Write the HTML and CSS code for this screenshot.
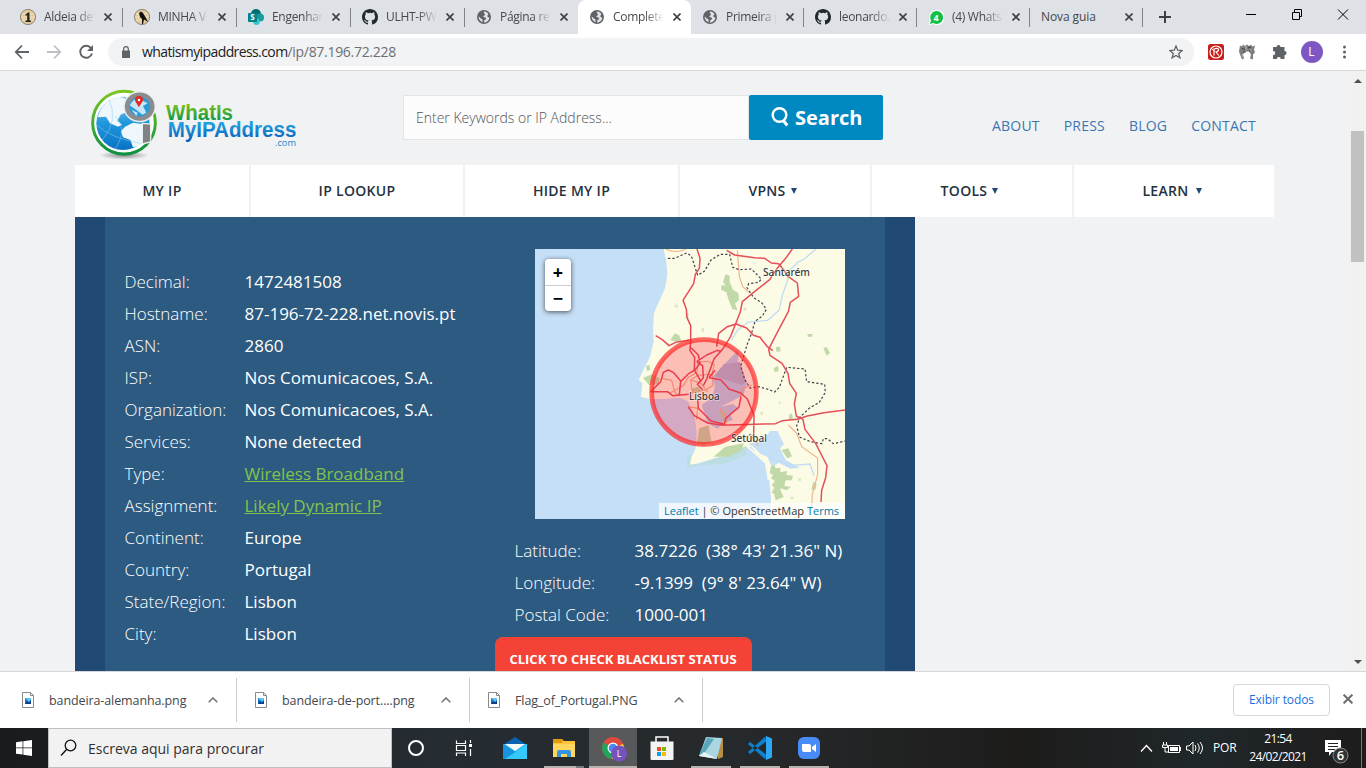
FILE: index.html
```html
<!DOCTYPE html>
<html lang="pt">
<head>
<meta charset="utf-8">
<title>Complete IP Address Details</title>
<link rel="stylesheet" href="styles.css">
</head>
<body>
<svg class="defs" width="0" height="0">
  <symbol id="globe" viewBox="0 0 14 14"><circle cx="7" cy="7" r="7" fill="#5f6368"/><path d="M7 1.6C6.2 3 7.6 3.5 8 4.6c.3 1-1.600 1-1.700 2 .2 1.200 1.900.4 2.700 1.400.5 1-.6 1.600-1.700 2.200L7 12.400C10 12.500 12.300 10 12.400 7.400c-1.200.4-2-.3-2-1.300 0-1 .7-1 1-2C10.500 2.500 9 1.500 7 1.600zM1.600 6.500C1.600 9 3 11.500 5.500 12.200 5.400 10.500 6 10 5 9 4 8.600 3.500 8.600 3 7.500z" fill="#dee1e6"/></symbol>
  <symbol id="github" viewBox="0 0 16 16"><path fill="#24292e" d="M8 0C3.58 0 0 3.58 0 8c0 3.540 2.290 6.530 5.470 7.590.4.070.55-.17.55-.38v-1.490c-2.010.37-2.530-.49-2.690-.94-.09-.23-.48-.94-.82-1.130-.28-.15-.68-.52-.01-.53.63-.01 1.080.58 1.230.82.72 1.210 1.870.87 2.330.66.07-.52.28-.87.51-1.070-1.780-.2-3.640-.89-3.640-3.950 0-.87.31-1.590.82-2.150-.08-.2-.36-1.020.08-2.120 0 0 .67-.21 2.200.82a7.600 7.600 0 0 1 4 0c1.530-1.040 2.200-.82 2.200-.82.44 1.100.16 1.920.08 2.120.51.56.82 1.270.82 2.150 0 3.070-1.870 3.750-3.650 3.950.29.25.54.73.54 1.480v2.200c0 .21.15.46.55.38A8 8 0 0 0 16 8c0-4.420-3.580-8-8-8z"/></symbol>
  <symbol id="x" viewBox="0 0 8 8"><path d="M.5.5l7 7M7.500.5l-7 7" stroke="currentColor" stroke-width="1.600" fill="none"/></symbol>
  <symbol id="file" viewBox="0 0 12 16"><path d="M.5.5h8l3 3v12H.5z" fill="#fff" stroke="#8a8a8a"/><path d="M8.500.5v3h3" fill="none" stroke="#8a8a8a"/><path d="M3 6h6v6H3z" fill="#1976c8"/><path d="M3 6h6v3L7 10 5 8z" fill="#5fc3f2"/><path d="M3 12l2-3 2 1.500L9 8v4z" fill="#0b3f86"/></symbol>
  <symbol id="up" viewBox="0 0 10 6"><path d="M.7 5.300L5 1l4.300 4.300" fill="none" stroke="currentColor" stroke-width="1.600"/></symbol>
</svg>

<div class="tabs">
  <div class="tab"><svg class="fav" viewBox="0 0 16 16"><circle cx="8" cy="8" r="7.600" fill="#e3cb9b" stroke="#77705f" stroke-width=".8"/><path d="M2 5h12M1 8h14M2 11h12" stroke="#f4e5c4"/><path d="M5.500 5.500L8 3.500h1.500v8H11V13H5.500v-1.500h1.700V6l-1.700 1z" fill="#222"/></svg><span class="name">Aldeia de</span><svg class="close"><use href="#x"/></svg></div>
  <div class="tab"><svg class="fav" viewBox="0 0 16 16"><circle cx="8" cy="8" r="7.600" fill="#e3cb9b" stroke="#77705f" stroke-width=".8"/><path d="M2 5h12M1 8h14M2 11h12" stroke="#f4e5c4"/><path d="M5 4l2-1.500L9 4l3 5 2 4-4-2.500L9 15H8v-5L6 8z" fill="#111"/></svg><span class="name">MINHA V</span><svg class="close"><use href="#x"/></svg></div>
  <div class="tab"><svg class="fav" viewBox="0 0 16 16"><circle cx="8" cy="5" r="5" fill="#036c70"/><circle cx="12" cy="8.500" r="4" fill="#1a9ba1"/><circle cx="8.500" cy="12.800" r="3.200" fill="#37c6d0"/><rect y="4" width="9" height="9" rx="1" fill="#038387"/><text x="4.500" y="11" class="sp">S</text></svg><span class="name">Engenhar</span><svg class="close"><use href="#x"/></svg></div>
  <div class="tab"><svg class="fav"><use href="#github"/></svg><span class="name">ULHT-PW</span><svg class="close"><use href="#x"/></svg></div>
  <div class="tab plain"><svg class="fav small"><use href="#globe"/></svg><span class="name">Página re</span><svg class="close"><use href="#x"/></svg></div>
  <div class="tab active plain"><svg class="fav small"><use href="#globe"/></svg><span class="name">Complete</span><svg class="close"><use href="#x"/></svg></div>
  <div class="tab"><svg class="fav small"><use href="#globe"/></svg><span class="name">Primeira p</span><svg class="close"><use href="#x"/></svg></div>
  <div class="tab"><svg class="fav"><use href="#github"/></svg><span class="name">leonardoz</span><svg class="close"><use href="#x"/></svg></div>
  <div class="tab"><svg class="fav" viewBox="0 0 16 16"><path d="M1 16l1-4.500A7.600 7.600 0 1 1 5 15z" fill="#fff"/><path d="M2 15l1-3.600A6.400 6.400 0 1 1 5.500 14z" fill="#12c143"/><text x="8.200" y="11.500" class="wa">4</text></svg><span class="name">(4) Whats</span><svg class="close"><use href="#x"/></svg></div>
  <div class="tab"><span class="name wide">Nova guia</span><svg class="close"><use href="#x"/></svg></div>
  <svg class="newtab" viewBox="0 0 12 12"><path d="M6 0v12M0 6h12" stroke="#3c4043" stroke-width="2"/></svg>
  <svg class="winctl" viewBox="0 0 104 12"><path d="M0 6.500h10" stroke="#000"/><path d="M46.500 4.500h7v7h-7zM48.500 4v-2.500h7v7H54" fill="none" stroke="#000"/><path d="M92 1.500l10 10M102 1.500l-10 10" stroke="#000"/></svg>
</div>

<div class="toolbar">
  <svg class="navicons" viewBox="0 0 96 36"><path d="M29 18H16M22 11.500L15.800 18l6.200 6.500" fill="none" stroke="#5f6368" stroke-width="1.800"/><path d="M47 18h13M54 11.500l6.200 6.500-6.200 6.500" fill="none" stroke="#bdc1c6" stroke-width="1.800"/><path d="M91.300 14.500A6 6 0 1 0 92 19.500" fill="none" stroke="#5f6368" stroke-width="1.900"/><path d="M93 11v6h-6z" fill="#5f6368"/></svg>
  <div class="omnibox">
    <svg class="lock" viewBox="0 0 8 12"><path d="M0 4.500h8V12H0z" fill="#5f6368"/><path d="M1.700 5V3a2.300 2.300 0 0 1 4.600 0v2" fill="none" stroke="#5f6368" stroke-width="1.200"/></svg>
    <span class="url">whatismyipaddress.com<span class="path">/ip/87.196.72.228</span></span>
    <svg class="star" viewBox="0 0 14 14"><path d="M7 1l1.700 4.200 4.500.3-3.500 2.900 1.200 4.400L7 10.400l-3.900 2.400 1.200-4.400L.8 5.500l4.500-.3z" fill="none" stroke="#5f6368" stroke-width="1.300"/></svg>
  </div>
  <svg class="exts" viewBox="0 0 172 36">
    <rect x="14" y="10" width="16" height="16" rx="2.500" fill="#c9201c"/><circle cx="22" cy="18" r="6" fill="none" stroke="#fff" stroke-width="1.200"/><path d="M20 21.500v-6.500q4-1.500 4.500.8 0 1.700-2.500 2.200l2.800 3.500" fill="none" stroke="#fff" stroke-width="1.200"/><path d="M17.500 14.500l3 3" stroke="#fff"/>
    <path d="M46 11.500l2 1 1-2 2 1.500 2-1.500 2 1.500 2-1.500 1 2 3-1-1 4 1 3-2 2v5l-3-1 1-4-2-3h-4l-2 3 1 4-2 1-2-5-1-3z" fill="#7d7d7d"/><path d="M48 14.500l3 1M54 14l3-1M49 18h3M55 17h3" stroke="#3a3a3a"/><path d="M52 12v4M57 15v3M48 20l1 3" stroke="#bbb"/>
    <path d="M79 13h3.500a2 2 0 0 1 4 0h4v4a2.100 2.100 0 0 1 0 4.200V25h-3.700a2 2 0 0 0-4 0H79v-3.700a2.200 2.200 0 0 0 0-4.400z" fill="#5f6368"/>
    <circle cx="118" cy="18" r="11" fill="#7e57c2"/><text x="117.500" y="22" class="avatar">L</text>
    <circle cx="150.500" cy="13" r="1.500" fill="#5f6368"/><circle cx="150.500" cy="18" r="1.500" fill="#5f6368"/><circle cx="150.500" cy="23" r="1.500" fill="#5f6368"/>
  </svg>
</div>

<div class="viewport">
  <div class="page">
    <header class="head">
      <svg class="logo" viewBox="0 0 720 255">
        <defs>
          <linearGradient id="ring" x1="0" y1="0" x2="0" y2="1"><stop offset="0" stop-color="#7cc623"/><stop offset="1" stop-color="#0d9140"/></linearGradient>
          <linearGradient id="sea" x1="0" y1="0" x2="0" y2="1"><stop offset="0" stop-color="#8acbee"/><stop offset=".5" stop-color="#1f97dc"/><stop offset="1" stop-color="#0a72c5"/></linearGradient>
          <linearGradient id="word1" x1="0" y1="0" x2="0" y2="1"><stop offset=".2" stop-color="#79bf20"/><stop offset=".85" stop-color="#07964b"/></linearGradient>
          <linearGradient id="word2" x1="0" y1="0" x2="0" y2="1"><stop offset=".2" stop-color="#20a0e0"/><stop offset="1" stop-color="#0759b5"/></linearGradient>
          <radialGradient id="shade"><stop offset="0" stop-color="#888"/><stop offset="1" stop-color="#f1f2f4"/></radialGradient>
        </defs>
        <ellipse cx="147" cy="226" rx="74" ry="13" fill="url(#shade)"/>
        <circle cx="147" cy="128" r="94" fill="#fff" stroke="url(#ring)" stroke-width="9"/>
        <circle cx="144" cy="130" r="80" fill="url(#sea)"/>
        <path d="M68 112Q80 62 133 50l22 8-10 22 14 14-22 10-10 18 14 12-12 6-24-10-12-20zM150 140l24-12 28 4 22 18-8 28-24 20-18 4-8-22-22-8-6-18z" fill="#eef7fc"/>
        <path d="M64 135Q110 175 196 190M82 180q50-60 20-120M120 208q40-60 0-100" fill="none" stroke="#8dcdf0" stroke-width="1.500"/>
        <ellipse cx="194" cy="80" rx="38" ry="36" fill="#2a9bd9" stroke="#eceeef" stroke-width="22"/>
        <ellipse cx="194" cy="80" rx="38" ry="36" fill="#2a9bd9" stroke="#8b8c8f" stroke-width="13"/>
        <path d="M164 76q14-24 28-20l26 14-14 8 10 20-12 6-15-12zM170 90l18 8-4 10z" fill="#c6e6f7"/>
        <path d="M192 82c-5-11-12-16-12-23a12 11 0 0 1 24 0c0 7-8 12-12 23z" fill="#e22922"/><circle cx="192" cy="60" r="4" fill="#fff"/>
        <path d="M202 130l25 2v54l-25 6z" fill="#808286" stroke="#eceeef" stroke-width="4"/>
        <text x="273" y="120" textLength="201" lengthAdjust="spacingAndGlyphs" class="w1">WhatIs</text>
        <text x="278" y="172" textLength="386" lengthAdjust="spacingAndGlyphs" class="w2">MyIPAddress</text>
        <text x="600" y="197" textLength="63" lengthAdjust="spacingAndGlyphs" class="w3">.com</text>
      </svg>
      <div class="search"><div class="field">Enter Keywords or IP Address...</div><div class="btn"><svg viewBox="0 0 18 20"><circle cx="8.500" cy="8" r="6.800" fill="none" stroke="#fff" stroke-width="2.400"/><path d="M12 13l4.200 5.500" stroke="#fff" stroke-width="3"/></svg>Search</div></div>
      <nav class="links"><a>ABOUT</a><a>PRESS</a><a>BLOG</a><a>CONTACT</a></nav>
    </header>
    <nav class="menu">
      <a>MY IP</a><a>IP LOOKUP</a><a>HIDE MY IP</a><a>VPNS<i></i></a><a>TOOLS<i></i></a><a>LEARN<i class="far"></i></a>
    </nav>
    <main class="panel">
      <dl class="rows left">
        <dt>Decimal:</dt><dd>1472481508</dd>
        <dt>Hostname:</dt><dd>87-196-72-228.net.novis.pt</dd>
        <dt>ASN:</dt><dd>2860</dd>
        <dt>ISP:</dt><dd>Nos Comunicacoes, S.A.</dd>
        <dt>Organization:</dt><dd>Nos Comunicacoes, S.A.</dd>
        <dt>Services:</dt><dd>None detected</dd>
        <dt>Type:</dt><dd><a>Wireless Broadband</a></dd>
        <dt>Assignment:</dt><dd><a>Likely Dynamic IP</a></dd>
        <dt>Continent:</dt><dd>Europe</dd>
        <dt>Country:</dt><dd>Portugal</dd>
        <dt>State/Region:</dt><dd>Lisbon</dd>
        <dt>City:</dt><dd>Lisbon</dd>
      </dl>
      <section class="right">
        <div class="map">
          <svg viewBox="0 12 930 810">
            <rect y="12" width="930" height="810" fill="#c5dff6"/>
            <path d="M386 12L394 50 397 90 390 130 370 175 357 205 354 250 356 290 345 335 325 375 311 405 322 415 318 455 345 462 385 462 435 458 460 470 478 510 485 560 482 610 468 640 465 660 490 655 540 640 600 625 632 603 650 607 690 655 702 700 708 760 706 822H930V12z" fill="#fcfbe5"/>
            <path d="M455 630l15 0-6 28 26 0 50-17 60-14 35-27v30l-70 26-80 6-28 8z" fill="#b5dcd5" opacity=".6"/>
            <path d="M632 603l58 52 8 50 5 0-4-45-20-26-44-33z" fill="#fcfbe5"/>
            <path d="M640 596l45-8 20-30 22 0 20 40-12 12 17 35 42 23-28 3-35-18-20 14-14-32-20-8-20-20z" fill="#c5dff6"/>
            <path d="M500 480l30-20 10-38-8-25 34-38 30-30 12-15 2 30-14 26 22 15 18 28-10 36-40 22-30 14 38-8 20 14-30 16 10 18-30 8-16 18-30-16z" fill="#b7d3ed"/>
            <path d="M590 285l18-30 30-23 60-6 34-30 10-45 16-45 0-24 30-30 20-10 35-30M705 635l60 27 60-5 12 35" fill="none" stroke="#c2ddf2" stroke-width="4"/>
            <path d="M572 88l12 4 0 20 10 22 16 10 2 20-12 12 8 20-16-4-12-30-6-20-16-8 2-14 12 2-8-12zM406 285l6-10 8-10 12 6 8 18-22 0zM333 362l10-3 3 16-10 3zM324 398l28-10 22 12-4 18-28 2zM493 549l28-8 8 50-20 10-24-4zM536 635l35-30 55-10-4 20-40 20zM740 615l20-5 11 24-14 6zM708 664l10-4 4 10 14-2 0 14 20-4-2 12 20 2-4 14-18 0-4 16 20 4-14 10-16-6-12 18-16-4 8-16-8-8 10-12-12-8 6-10-10-6zM714 733l20-3 12 26-24 10zM835 710l10 6-4 18-12 0zM865 310l10-4 10 18-10 8zM818 267h14v8h-14zM716 370l13-8 2 16-12 4zM762 510l9-5 3 18-12 2zM722 307l13-2 2 14-12 2zM556 500l12-7 4 24-14 6zM470 431l20-6 10 14-26 4z" fill="#c1d8a8"/>
            <path d="M500 248h7v14h-7zM452 205h9v16h-9zM420 177l10 4-3 8-9-4zM625 190l8-4 2 8-7 4zM676 500h8v10h-8zM780 515h14v8h-14zM730 470h8v6h-8zM790 700h8v8h-8zM765 755h12v7h-12z" fill="#dfe8c5"/>
            <path d="M566 358l48-8 20 60-14 10-80-26z" fill="#aebbd5"/>
            <path d="M392 12q30 15 60 0M607 16l6 78 10 30 18 18M380 400l30 6 10 38 15 8M404 445l42-24 12-22 28-18 2-30 30-2 20 10-6 24 2 38-22 14-40 8-5-38 22-14 42-4M468 405l30 10 20 26M650 420l-26 10-10 25M555 490l20 30 0 14M760 540l25 25 15 40 48 34 0 50-16 58-2 50M645 566l15 20 10 18M460 485l28 5-4 34" fill="none" stroke="#efb58a" stroke-width="3.500"/>
            <path d="M399 40h20l36-16 14 9 19 58 20-12 20-34 28-17h28l9 39 20 7 36-2 30 30-8 10-30 4-5 12 20 30 24 15 14 20-12 20-22 16-11 38-12 30-20 66 12 40 16 26 26-4 28 8 20 8 14-14 22-60 55 5 5 38 54 8 2 24-18 30-28 16-30 28-10 26 8 34 34 14 34 6 4-15 12 0 18 15 54-12" fill="none" stroke="#45434f" stroke-width="3.600" stroke-dasharray="7 6"/>
            <g fill="none" stroke="#e44f58" stroke-width="4.500" stroke-linejoin="round">
              <path d="M486 12l9 28-2 30-12 18-5 28-32 50 10 26 2 26 11 24 0 45-2 30 14 20-1 38 20 35M362 272l20 12 20 18 20-10 40-6M575 16l24 14 60 8 30 2 20 14 22 2 16 20 12 18 28 20 4 40-25 18-6 28-24 45-20 38-15 30 4 18 36 24 18 30 5 30 20 30-6 32 6 36 20 10 6 30 32 42 16 32 18 35-4 36-12 38-2 35"/>
              <path d="M772 12l-20 28-24 28-24 36-38 30-44 36-6 30-14 36-15 38-22 36-28 32-22 60-10 20M545 305l6-40 26-20 26-8 32 12 20 22 20 6 22 28 16 12"/>
              <path d="M347 440l30-30 8-28 15-7 16 8 22 26 24-24 18-10 15-20-5-25-22-22M485 350l30-20 32-14 12 4M485 350l18 12 2 36-18 20 16 16M347 440h50l16 12 48-4M437 410l-4 38M522 398l35 6 25 28 35 12 20 18 20 48-1 60M522 398l18-22M488 462l2 28 38 38 40 10 4-18 40-34 6-32M460 486l18 26 40 22 40 6 24 0 140-4 20-9 45-4 30-10 50-10 64-8"/>
            </g>
            <circle cx="507" cy="441" r="157" fill="#f02" fill-opacity=".24" stroke="#f22" stroke-opacity=".68" stroke-width="14"/>
            <g class="city"><text x="684" y="93" textLength="141" lengthAdjust="spacingAndGlyphs">Santarém</text><text x="462" y="464" textLength="92" lengthAdjust="spacingAndGlyphs">Lisboa</text><text x="588" y="592" textLength="108" lengthAdjust="spacingAndGlyphs">Setúbal</text></g>
          </svg>
          <div class="zoom"><b>+</b><b>−</b></div>
          <div class="credit"><a>Leaflet</a> | © OpenStreetMap <a>Terms</a></div>
        </div>
        <dl class="rows coords">
          <dt>Latitude:</dt><dd>38.7226&nbsp; (38° 43' 21.36" N)</dd>
          <dt>Longitude:</dt><dd>-9.1399&nbsp; (9° 8' 23.64" W)</dd>
          <dt>Postal Code:</dt><dd>1000-001</dd>
        </dl>
        <div class="check">CLICK TO CHECK BLACKLIST STATUS</div>
      </section>
    </main>
  </div>
  <div class="scroll"><i class="tri"></i><div class="thumb"></div><i class="tri down"></i></div>
</div>

<div class="downloads">
  <div class="dl"><svg class="file"><use href="#file"/></svg><span>bandeira-alemanha.png</span><svg class="up"><use href="#up"/></svg></div>
  <div class="dl"><svg class="file"><use href="#file"/></svg><span>bandeira-de-port....png</span><svg class="up"><use href="#up"/></svg></div>
  <div class="dl"><svg class="file"><use href="#file"/></svg><span>Flag_of_Portugal.PNG</span><svg class="up"><use href="#up"/></svg></div>
  <div class="all">Exibir todos</div><svg class="xbar"><use href="#x"/></svg>
</div>

<div class="taskbar">
  <div class="start"><svg viewBox="0 0 16 16"><path d="M0 2.200l6.600-.9v6.300H0zM7.300 1.200L16 0v7.600H7.300zM0 8.300h6.600v6.300L0 13.700zM7.300 8.300H16V16l-8.700-1.200z" fill="#fff"/></svg></div>
  <div class="find"><svg viewBox="0 0 18 18"><circle cx="10.500" cy="6.500" r="5.300" fill="none" stroke="#111" stroke-width="1.300"/><path d="M6.800 10.300L1 16.500" stroke="#111" stroke-width="1.400"/></svg>Escreva aqui para procurar</div>
  <div class="app"><svg viewBox="0 0 48 40"><circle cx="24" cy="20" r="7" fill="none" stroke="#fff" stroke-width="2"/></svg></div>
  <div class="app"><svg viewBox="0 0 48 40"><path d="M16.500 12.500v3h9v-3M16.500 28v-3h9v3M16.500 17.500h9v5h-9zM30.500 12v3M30.500 21v7" fill="none" stroke="#fff" stroke-width="1.200"/><path d="M29 16h3v3h-3z" fill="#fff"/></svg></div>
  <div class="app mail"><svg viewBox="0 0 48 40"><path d="M12 17L24 9l12 8z" fill="#0864b2"/><path d="M12 16h24v15H12z" fill="#27b7f3"/><path d="M12 16l24 15H12z" fill="#1794dd"/><path d="M36 16L14 31h22z" fill="#35c8fa"/><path d="M14 16h20l-10 7z" fill="#f4f8fb"/></svg></div>
  <div class="app run stack"><svg viewBox="0 0 48 40"><path d="M13 11h9l2 2h11v16H13z" fill="#ffc63b"/><path d="M13 11h9l1 2-1 2h-9z" fill="#e29c10"/><path d="M13 16h22v13H13z" fill="#ffd75e"/><path d="M17 29v-5q0-2 2-2h10q2 0 2 2v5h-4v-3h-6v3z" fill="#3495df"/></svg></div>
  <div class="app current run"><svg viewBox="0 0 48 40"><circle cx="24" cy="20" r="11" fill="#dd4a3e"/><path d="M24 20L14.500 14.500A11 11 0 0 0 23 31z" fill="#20a35a"/><path d="M24 20l10-4a11 11 0 0 1-11 15z" fill="#ffd045"/><circle cx="24" cy="20" r="5.500" fill="#fff"/><circle cx="24" cy="20" r="4.300" fill="#448bf4"/><circle cx="30" cy="25.500" r="8" fill="#7652bd"/><text x="30" y="29" class="cl">L</text></svg></div>
  <div class="app store"><svg viewBox="0 0 48 40"><path d="M18 14V9h12v5" fill="none" stroke="#fff" stroke-width="1.500"/><path d="M12.500 13.500h23V31q0 1-1 1h-21q-1 0-1-1z" fill="#f4f4f4"/><path d="M19 19h4v4h-4z" fill="#f25022"/><path d="M24 19h4v4h-4z" fill="#7fba00"/><path d="M19 24h4v4h-4z" fill="#00a4ef"/><path d="M24 24h4v4h-4z" fill="#ffb900"/></svg></div>
  <div class="app run"><svg viewBox="0 0 48 40"><path d="M31 10h5v19l-5 2z" fill="#b88e44"/><path d="M19 9l16 1-5 21-18-3z" fill="#a9d6e0"/><path d="M20 10l7 1-11 16-4 0z" fill="#59a6b8"/><path d="M12 28l5-4 13 7z" fill="#e6f4f6"/></svg></div>
  <div class="app run"><svg viewBox="0 0 48 40"><path d="M30 13.500L14 26l-2-2L29.500 8.500zM30 26.500L14 14l-2 2 17.500 15.500z" fill="#0c82cf"/><path d="M30 8l6 2.500v19L30 32z" fill="#2ba8f5"/></svg></div>
  <div class="app run"><svg viewBox="0 0 48 40"><rect x="13" y="9" width="22" height="22" rx="6" fill="#4a8cf7"/><path d="M17 16h7q2 0 2 2v6h-7q-2 0-2-2zM27 19l4-3v8l-4-3z" fill="#fff"/></svg></div>
  <svg class="tray" viewBox="0 0 76 40"><path d="M2 23.500l5.500-6 5.500 6" fill="none" stroke="#fff" stroke-width="1.300"/><path d="M29.500 17.500h11v7h-11zM41.500 19v4" fill="none" stroke="#fff"/><path d="M31 19h8v4h-8z" fill="#fff"/><path d="M24.500 14v3M27.500 14v3M23.500 17h5v2.500h-5zM26 20v4h4" fill="none" stroke="#fff"/><path d="M47.500 18h2.500l4-4v12l-4-4h-2.500zM56 17q2 3 0 6M58.500 15.500q3.500 4.500 0 9M61 14q5 6 0 12" fill="none" stroke="#fff"/></svg>
  <span class="lang">POR</span>
  <span class="clock">21:54<br>24/02/2021</span>
  <svg class="note" viewBox="0 0 44 40"><path d="M3 12h16v12h-9l-3 4v-4H3z" fill="#fff"/><path d="M6 15.500h10M6 18.500h10M6 21.500h7" stroke="#222"/><circle cx="18.500" cy="27.500" r="7.500" fill="#303234" stroke="#8b8d8f"/><text x="18.500" y="31.500" class="cnt">6</text><path d="M39.500 0v40" stroke="#777"/></svg>
</div>
</body>
</html>
```

FILE: styles.css
```css
* { box-sizing: border-box; }
html, body { margin: 0; width: 1366px; height: 768px; overflow: hidden; }
body { display: flex; flex-direction: column; background: #f1f2f4; font-family: "Open Sans", "Noto Sans", sans-serif; }
svg { display: block; flex: none; }
.defs { position: absolute; }

.tabs { flex: none; height: 34px; background: #dee1e6; display: flex; align-items: center; padding-left: 9px; }
.tab { width: 113px; height: 34px; flex: none; display: flex; align-items: center; padding-left: 11px; color: #45484c; position: relative; }
.tab:nth-child(-n+4) { width: 114px; }
.tab::after { content: ""; position: absolute; right: 0; top: 8px; width: 1px; height: 19px; background: #808387; }
.tab.plain::after { display: none; }
.tab.plain, .tab.plain + .tab { padding-left: 12px; }
.tab.active { background: #fff; border-radius: 8px 8px 0 0; }
.fav { width: 16px; height: 16px; margin-right: 8px; }
.fav.small { width: 14px; height: 14px; margin-right: 9px; }
.name { width: 58px; margin-right: -8px; overflow: hidden; white-space: nowrap; font-size: 12px; line-height: 20px; letter-spacing: -.3px; -webkit-mask-image: linear-gradient(90deg, #000 32px, transparent 51px); mask-image: linear-gradient(90deg, #000 32px, transparent 51px); }
.name.wide { width: 74px; margin-right: 0; letter-spacing: -.1px; -webkit-mask-image: none; mask-image: none; }
.close { width: 8px; height: 8px; margin-left: 10px; color: #3c4043; }
.newtab { width: 12px; height: 12px; margin-left: 16px; }
.winctl { width: 104px; height: 12px; margin: -7px 0 0 75px; }
.sp { font: bold 8px "Open Sans", sans-serif; fill: #fff; text-anchor: middle; }
.wa { font: bold 9px "Open Sans", sans-serif; fill: #fff; text-anchor: middle; }

.toolbar { flex: none; height: 37px; background: #fff; border-bottom: 1px solid #d5d7da; display: flex; align-items: center; }
.navicons { width: 96px; height: 36px; }
.omnibox { margin-left: 12px; width: 1086px; height: 28px; border-radius: 14px; background: #f1f3f4; display: flex; align-items: center; padding: 0 11px 0 14px; }
.lock { width: 8px; height: 12px; margin-right: 12px; }
.url { flex: 1; font-size: 14px; letter-spacing: -.6px; color: #202124; line-height: 20px; }
.path { color: #6b6f74; letter-spacing: -.3px; }
.star { width: 14px; height: 14px; }
.exts { width: 172px; height: 36px; }
.avatar { font: 12px "Open Sans", sans-serif; fill: #fff; text-anchor: middle; }

.viewport { flex: none; height: 600px; display: flex; overflow: hidden; }
.page { flex: 1; padding-left: 75px; }
.head { height: 94px; display: flex; align-items: flex-start; }
.logo { width: 240px; height: 85px; margin-top: 9px; }
.w1, .w2 { font: bold 66px "Liberation Sans", Arial, sans-serif; }
.w1 { fill: url(#word1); }
.w2 { fill: url(#word2); font-size: 64px; }
.w3 { font: 26px "Open Sans", sans-serif; fill: #1684cc; }
.search { margin: 24px 0 0 88px; width: 480px; height: 45px; display: flex; }
.field { width: 346px; background: #fcfcfc; border: 1px solid #e2e4e6; font-size: 14px; font-weight: 300; color: #555; padding-left: 12px; line-height: 44px; }
.btn { width: 134px; background: #0088c1; border-radius: 2px; color: #fff; font-size: 20px; font-weight: 700; display: flex; align-items: center; gap: 6px; padding-left: 22px; }
.btn svg { width: 18px; height: 20px; margin-top: -2px; }
.links { display: flex; gap: 24px; margin: 45px 0 0 109px; font-size: 14px; line-height: 20px; font-weight: 500; letter-spacing: .2px; color: #3c76b1; }
.menu { width: 1199px; height: 52px; display: grid; grid-template-columns: 174px 212px 213px 190px 200px 200px; gap: 2px; font-size: 14px; font-weight: 600; letter-spacing: .3px; color: #24323f; }
.menu a { background: #fff; display: flex; align-items: center; justify-content: center; padding-bottom: 1px; }
.menu i { border: 3.500px solid transparent; border-top: 6px solid #1f4a73; border-bottom: 0; margin: 0 5px 0 5px; }
.menu i.far { margin: 0 4px 0 7px; }

.panel { width: 840px; height: 480px; background: #2d5a80; border: solid #204a74; border-width: 0 30px; padding: 32px 0 0 20px; display: flex; }
.rows { margin: 0; display: grid; grid-template-columns: 120px auto; grid-auto-rows: 32px; align-content: start; line-height: 32px; font-size: 17px; color: #fff; white-space: nowrap; }
.rows dt { font-weight: 300; text-indent: -.5px; }
.rows dd { margin: 0; font-weight: 500; text-indent: -.5px; }
.rows a { color: #81c34d; text-decoration: underline; font-weight: 400; }
.left { width: 370px; padding-top: 17px; }
.right { width: 350px; }
.map { position: relative; width: 310px; height: 270px; margin-left: 40px; }
.map > svg { width: 310px; height: 270px; }
.zoom { position: absolute; left: 10px; top: 10px; width: 26px; height: 52px; border-radius: 4px; background: #fff; box-shadow: 0 1px 5px rgba(0,0,0,.65); }
.zoom b { display: block; height: 26px; line-height: 26px; text-align: center; font-size: 18px; color: #000; }
.zoom b + b { border-top: 1px solid #ccc; line-height: 24px; }
.credit { position: absolute; right: 0; bottom: 0; width: 186px; height: 16px; background: rgba(255,255,255,.75); font-size: 11px; line-height: 16px; color: #333; padding-left: 5px; white-space: nowrap; }
.credit a { color: #0078a8; }
.city { font: 500 31px "Noto Sans", sans-serif; fill: #3c3c3c; stroke: #fff; stroke-opacity: .5; stroke-width: 4px; paint-order: stroke; }
.coords { margin: 16px 0 0 20px; }
.check { width: 257px; height: 44px; border-radius: 8px; background: #f54236; color: #fff; font-size: 13px; font-weight: 700; text-align: center; text-indent: -1px; line-height: 44px; margin-top: 6px; }

.scroll { width: 17px; background: #f1f1f1; display: flex; flex-direction: column; align-items: center; }
.tri { border: 4px solid transparent; border-bottom: 4px solid #505050; border-top: 0; margin-top: 8px; }
.thumb { width: 13px; height: 131px; background: #c1c1c1; margin: 48px 0 398px; }
.tri.down { border-bottom: 0; border-top: 4px solid #505050; margin-top: 0; }

.downloads { flex: none; height: 57px; background: #fff; border-top: 1px solid #d5d7da; display: flex; align-items: center; font-size: 12.500px; color: #44474b; }
.dl { width: 233px; height: 44px; border-right: 1px solid #ccc; display: flex; align-items: center; padding: 0 18px 0 18px; }
.dl:first-child { width: 237px; padding-left: 22px; }
.dl span { flex: 1; margin-left: 15px; letter-spacing: -.1px; white-space: nowrap; }
.file { width: 12px; height: 16px; }
.up { width: 10px; height: 6px; color: #777; }
.all { margin-left: 530px; width: 97px; height: 32px; border: 1px solid #d5d8dc; border-radius: 4px; color: #1a6fe0; text-align: center; line-height: 29px; font-size: 12px; font-weight: 500; letter-spacing: -.1px; }
.xbar { width: 10px; height: 10px; margin: -2px 0 0 13px; color: #6a6d70; }

.taskbar { flex: none; height: 40px; background: linear-gradient(90deg, #191b1d, #252c32 32%, #26292b 55%, #1d1c1b 75%, #20272a 88%, #1e1c1c); display: flex; color: #fff; }
.start { width: 48px; padding: 12px 16px; }
.start svg { width: 16px; height: 16px; }
.find { width: 344px; height: 40px; background: #f2f2f2; border: 1px solid #bfc0c2; color: #303030; font-size: 14px; display: flex; align-items: center; gap: 10px; padding-left: 11px; }
.find svg { width: 18px; height: 18px; }
.app { width: 48px; height: 40px; position: relative; }
.app svg { width: 48px; height: 40px; }
.mail { margin-left: 3px; }
.store { margin-left: 1px; }
.app.current { background: #57595b; }
.run { margin-left: 1px; }
.run::after { content: ""; position: absolute; left: 4px; right: 4px; bottom: 0; height: 2px; background: #b6b3ae; }
.stack::after { border-right: 8px solid #77797a; }
.current::after { left: 0; right: 0; }
.cl { font: 9px "Open Sans", sans-serif; fill: #fff; text-anchor: middle; }
.tray { width: 76px; height: 40px; margin-left: 306px; }
.lang { width: 24px; margin-left: -2px; font-size: 12px; line-height: 39px; letter-spacing: -.2px; }
.clock { width: 62px; margin-left: 10px; padding-top: 2px; font-size: 12px; line-height: 18px; letter-spacing: -.6px; text-align: center; white-space: nowrap; }
.note { width: 44px; height: 40px; margin-left: auto; }
.cnt { font: 600 13px "Open Sans", sans-serif; fill: #fff; text-anchor: middle; }
```
